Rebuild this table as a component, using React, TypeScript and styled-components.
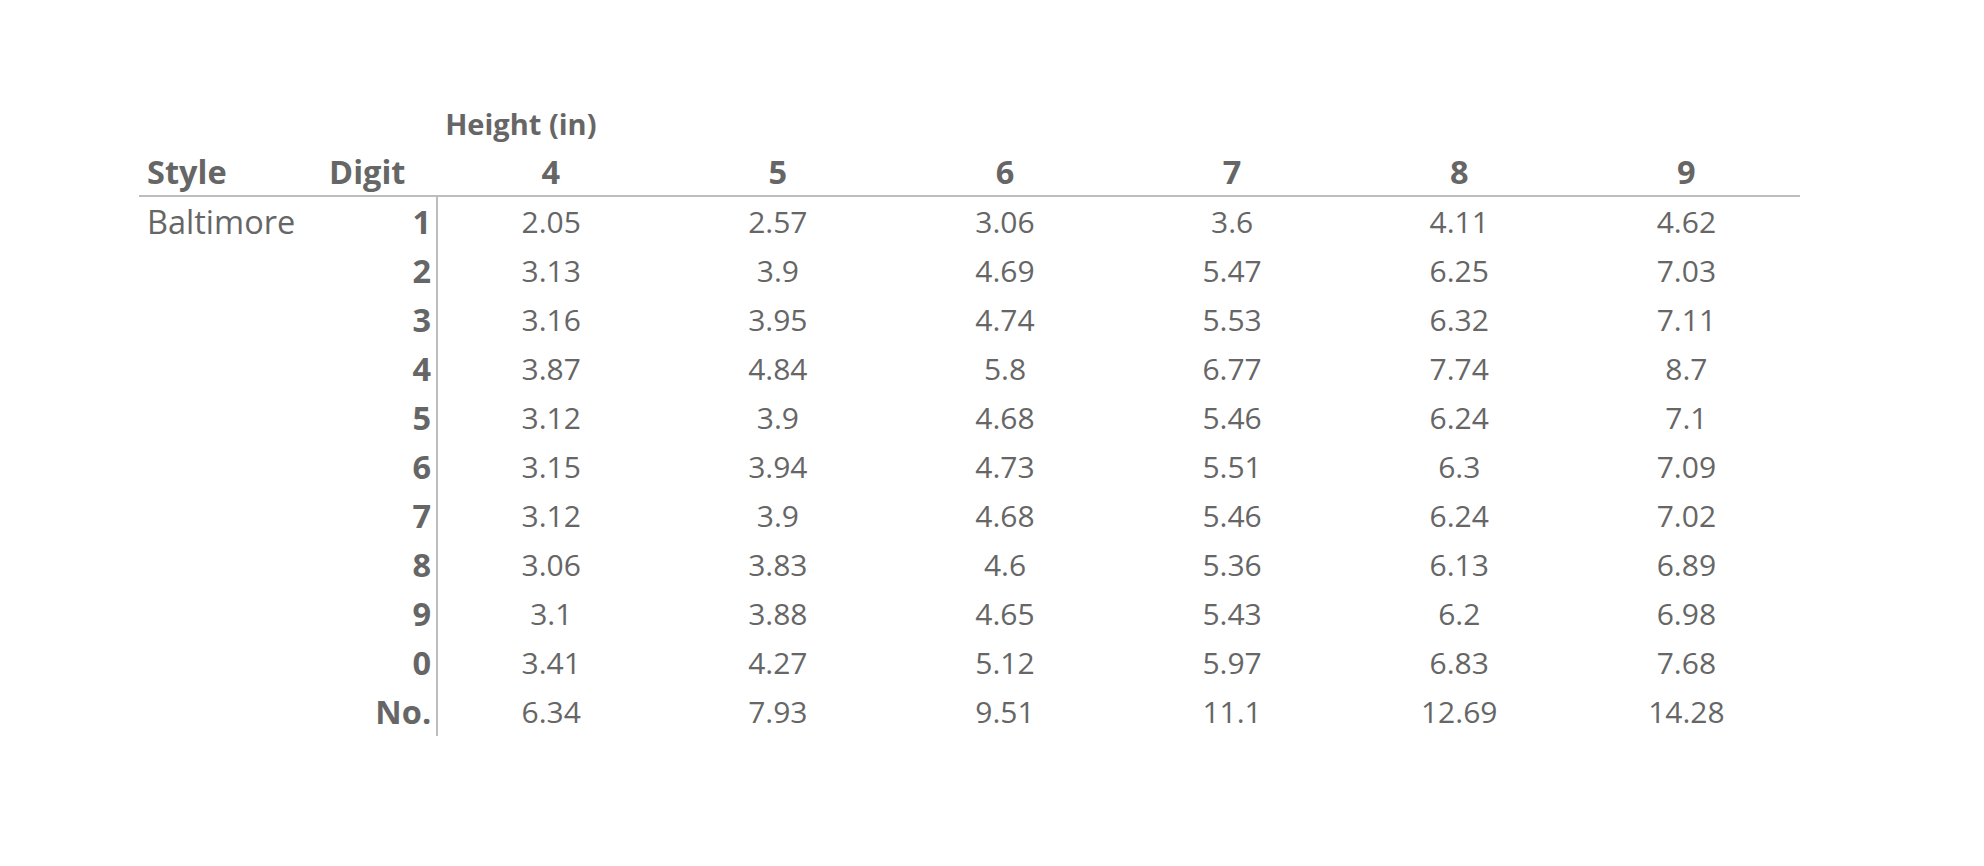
import React from 'react'
import styled, { createGlobalStyle } from 'styled-components'

const GlobalStyle = createGlobalStyle`
  html, body {
    margin: 0;
    padding: 0;
    background: #ffffff;
  }
  body {
    font-family: 'Open Sans', 'Liberation Sans', sans-serif;
    color: #666666;
  }
`

const Page = styled.div`
  width: 1984px;
  height: 866px;
  padding: 100px 0 0 139px;
  box-sizing: border-box;
`

const Table = styled.table`
  border-collapse: collapse;
  table-layout: fixed;
  width: 1661px;
  color: #666666;
`

const Col = styled.col<{ $w: number }>`
  width: ${(p) => p.$w}px;
`

const SpannerCell = styled.th`
  height: 48px;
  line-height: 48px;
  padding: 0 8px;
  font-size: 29px;
  font-weight: 700;
  text-align: left;
  white-space: nowrap;
`

const HeadRow = styled.tr`
  border-bottom: 2px solid #bdbdbd;
`

const HeadCell = styled.th<{ $align?: string }>`
  height: 47px;
  line-height: 47px;
  padding: 0 8px;
  font-size: 32.5px;
  font-weight: 700;
  text-align: ${(p) => p.$align ?? 'center'};
  white-space: nowrap;
`

const StyleCell = styled.td`
  height: 49px;
  line-height: 49px;
  padding: 0 8px;
  font-size: 32.5px;
  vertical-align: top;
  text-align: left;
  white-space: nowrap;
`

const DigitCell = styled.td`
  height: 49px;
  line-height: 49px;
  padding: 0 5px 0 8px;
  font-size: 32.5px;
  font-weight: 700;
  text-align: right;
  border-right: 2px solid #bdbdbd;
  white-space: nowrap;
`

const ValueCell = styled.td`
  height: 49px;
  line-height: 49px;
  padding: 0 8px;
  font-size: 30px;
  text-align: center;
  white-space: nowrap;
`

const heights = ['4', '5', '6', '7', '8', '9']

const rows: { digit: string; values: string[] }[] = [
  { digit: '1', values: ['2.05', '2.57', '3.06', '3.6', '4.11', '4.62'] },
  { digit: '2', values: ['3.13', '3.9', '4.69', '5.47', '6.25', '7.03'] },
  { digit: '3', values: ['3.16', '3.95', '4.74', '5.53', '6.32', '7.11'] },
  { digit: '4', values: ['3.87', '4.84', '5.8', '6.77', '7.74', '8.7'] },
  { digit: '5', values: ['3.12', '3.9', '4.68', '5.46', '6.24', '7.1'] },
  { digit: '6', values: ['3.15', '3.94', '4.73', '5.51', '6.3', '7.09'] },
  { digit: '7', values: ['3.12', '3.9', '4.68', '5.46', '6.24', '7.02'] },
  { digit: '8', values: ['3.06', '3.83', '4.6', '5.36', '6.13', '6.89'] },
  { digit: '9', values: ['3.1', '3.88', '4.65', '5.43', '6.2', '6.98'] },
  { digit: '0', values: ['3.41', '4.27', '5.12', '5.97', '6.83', '7.68'] },
  { digit: 'No.', values: ['6.34', '7.93', '9.51', '11.1', '12.69', '14.28'] },
]

export default function App() {
  return (
    <>
      <GlobalStyle />
      <Page>
        <Table>
          <colgroup>
            <Col $w={182} />
            <Col $w={116} />
            {heights.map((h) => (
              <Col key={h} $w={227} />
            ))}
          </colgroup>
          <thead>
            <tr>
              <th />
              <th />
              <SpannerCell colSpan={6}>Height (in)</SpannerCell>
            </tr>
            <HeadRow>
              <HeadCell $align="left">Style</HeadCell>
              <HeadCell $align="left">Digit</HeadCell>
              {heights.map((h) => (
                <HeadCell key={h}>{h}</HeadCell>
              ))}
            </HeadRow>
          </thead>
          <tbody>
            {rows.map((row, i) => (
              <tr key={row.digit}>
                {i === 0 && <StyleCell rowSpan={rows.length}>Baltimore</StyleCell>}
                <DigitCell>{row.digit}</DigitCell>
                {row.values.map((v, j) => (
                  <ValueCell key={j}>{v}</ValueCell>
                ))}
              </tr>
            ))}
          </tbody>
        </Table>
      </Page>
    </>
  )
}
